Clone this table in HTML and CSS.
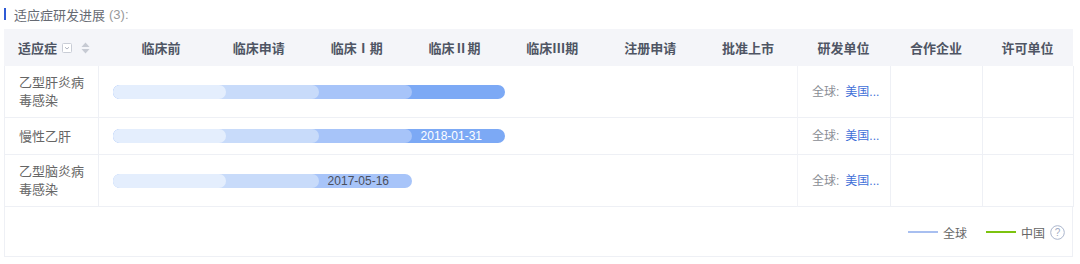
FILE: index.html
```html
<!DOCTYPE html>
<html lang="zh">
<head>
<meta charset="utf-8">
<link rel="stylesheet" href="styles.css">
</head>
<body>
<div class="page">
  <div class="title">
    <span class="title-mark"></span>
    <span class="title-text">适应症研发进展</span>
    <span class="title-count">(3):</span>
  </div>

  <div class="table">
    <div class="thead">
      <div class="th th-ind">
        <span>适应症</span>
        <svg class="filter-ic" width="10" height="10" viewBox="0 0 10 10"><rect x="0.5" y="0.5" width="9" height="9" rx="1" fill="#fff" stroke="#c9cdd6"/><path d="M3 4.2 L5 6 L7 4.2" fill="none" stroke="#a7adba" stroke-width="0.9"/></svg>
        <svg class="sort-ic" width="9" height="12" viewBox="0 0 9 12"><path d="M4.5 0.5 L8.5 5 L0.5 5 Z" fill="#c6cad3"/><path d="M4.5 11.5 L8.5 7 L0.5 7 Z" fill="#c6cad3"/></svg>
      </div>
      <div class="th-stages">
        <div class="th">临床前</div>
        <div class="th">临床申请</div>
        <div class="th">临床Ⅰ期</div>
        <div class="th">临床Ⅱ期</div>
        <div class="th">临床Ⅲ期</div>
        <div class="th">注册申请</div>
        <div class="th">批准上市</div>
      </div>
      <div class="th th-org">研发单位</div>
      <div class="th th-org">合作企业</div>
      <div class="th th-org">许可单位</div>
    </div>

    <div class="row">
      <div class="td td-ind">乙型肝炎病毒感染</div>
      <div class="td td-bar">
        <div class="seg s4" style="width:392px">
          <div class="seg s3" style="width:299px">
            <div class="seg s2" style="width:206px">
              <div class="seg s1" style="width:113px"></div>
            </div>
          </div>
        </div>
      </div>
      <div class="td td-org"><span class="scope">全球:</span><span class="link">美国...</span></div>
      <div class="td td-org"></div>
      <div class="td td-org td-last"></div>
    </div>

    <div class="row">
      <div class="td td-ind">慢性乙肝</div>
      <div class="td td-bar">
        <div class="seg s4" style="width:392px">
          <div class="seg s3" style="width:299px">
            <div class="seg s2" style="width:206px">
              <div class="seg s1" style="width:113px"></div>
            </div>
          </div>
          <span class="date date-light">2018-01-31</span>
        </div>
      </div>
      <div class="td td-org"><span class="scope">全球:</span><span class="link">美国...</span></div>
      <div class="td td-org"></div>
      <div class="td td-org td-last"></div>
    </div>

    <div class="row">
      <div class="td td-ind">乙型脑炎病毒感染</div>
      <div class="td td-bar">
        <div class="seg s3" style="width:299px">
          <div class="seg s2" style="width:206px">
            <div class="seg s1" style="width:113px"></div>
          </div>
          <span class="date date-dark">2017-05-16</span>
        </div>
      </div>
      <div class="td td-org"><span class="scope">全球:</span><span class="link">美国...</span></div>
      <div class="td td-org"></div>
      <div class="td td-org td-last"></div>
    </div>

    <div class="legend">
      <span class="lg-line lg-blue"></span><span class="lg-text">全球</span>
      <span class="lg-line lg-green"></span><span class="lg-text">中国</span>
      <svg class="help-ic" width="15" height="15" viewBox="0 0 15 15"><circle cx="7.5" cy="7.5" r="6.8" fill="none" stroke="#aab5cc" stroke-width="1"/><text x="7.5" y="11.2" text-anchor="middle" font-size="10" fill="#9fabc3" font-family="Liberation Sans, sans-serif">?</text></svg>
    </div>
  </div>
</div>
</body>
</html>
```

FILE: styles.css
```css
* { box-sizing: border-box; }
html, body { margin: 0; padding: 0; background: #fff; }
body {
  font-family: "Liberation Sans", "Noto Sans CJK SC", sans-serif;
  color: #666;
}
.page {
  width: 1080px;
  padding: 0 7px 0 4px;
}
.title {
  height: 29px;
  display: flex;
  align-items: center;
  padding-bottom: 1px;
}
.title-mark {
  width: 2px;
  height: 12px;
  background: #2f5bd6;
  margin-right: 8px;
}
.title-text {
  font-size: 13px;
  color: #666a73;
}
.title-count {
  font-size: 13px;
  color: #999;
  margin-left: 4px;
}

.table {
  width: 1069px;
}
.thead {
  display: grid;
  grid-template-columns: 94px 699px 93px 92px 91px;
  height: 37px;
  background: #f4f5f9;
}
.th {
  display: flex;
  align-items: center;
  justify-content: center;
  font-size: 13px;
  font-weight: bold;
  color: #4f5564;
  white-space: nowrap;
}
.th-ind {
  justify-content: flex-start;
  padding-left: 14px;
}
.filter-ic { margin-left: 5px; }
.sort-ic { margin-left: 9px; }
.th-stages {
  display: grid;
  grid-template-columns: repeat(7, 1fr);
  padding-left: 14px;
}

.row {
  display: grid;
  grid-template-columns: 94px 699px 93px 92px 91px;
  border-left: 1px solid #eef0f5;
}
.td {
  min-height: 37px;
  border-bottom: 1px solid #eef0f5;
  border-right: 1px solid #eef0f5;
  display: flex;
  align-items: center;
  font-size: 13px;
  line-height: 18px;
  color: #666;
}
.td-ind {
  padding: 8px 12px 7px 14px;
}
.td-bar {
  border-right-color: #f2f3f7;
  padding-left: 14px;
}
.td-org {
  padding-left: 14px;
  white-space: nowrap;
  font-size: 12px;
}
.scope { color: #8a8d94; }
.link { color: #3f6fd8; margin-left: 6px; }

.seg {
  height: 14px;
  border-radius: 7px;
  display: flex;
  align-items: center;
  justify-content: space-between;
  flex: none;
}
.s1 { background: #e4eefd; }
.s2 { background: #c8dbfa; }
.s3 { background: #a7c4f9; }
.s4 { background: #7ca9f5; }
.date {
  font-size: 12px;
  line-height: 14px;
  padding-right: 23px;
  font-family: "Liberation Sans", sans-serif;
}
.date-light { color: #fff; }
.date-dark { color: #4a4f5c; }

.legend {
  height: 50px;
  border-left: 1px solid #eef0f5;
  border-right: 1px solid #eef0f5;
  border-bottom: 1px solid #eef0f5;
  display: flex;
  align-items: center;
  justify-content: flex-end;
  padding-right: 7px;
  padding-top: 1px;
}
.lg-line {
  width: 30px;
  height: 2px;
  margin-right: 5px;
}
.lg-blue { background: #a8bff0; }
.lg-green { background: #7cc30f; margin-left: 19px; }
.lg-text {
  font-size: 12px;
  color: #666;
}
.help-ic { margin-left: 5px; }
```
